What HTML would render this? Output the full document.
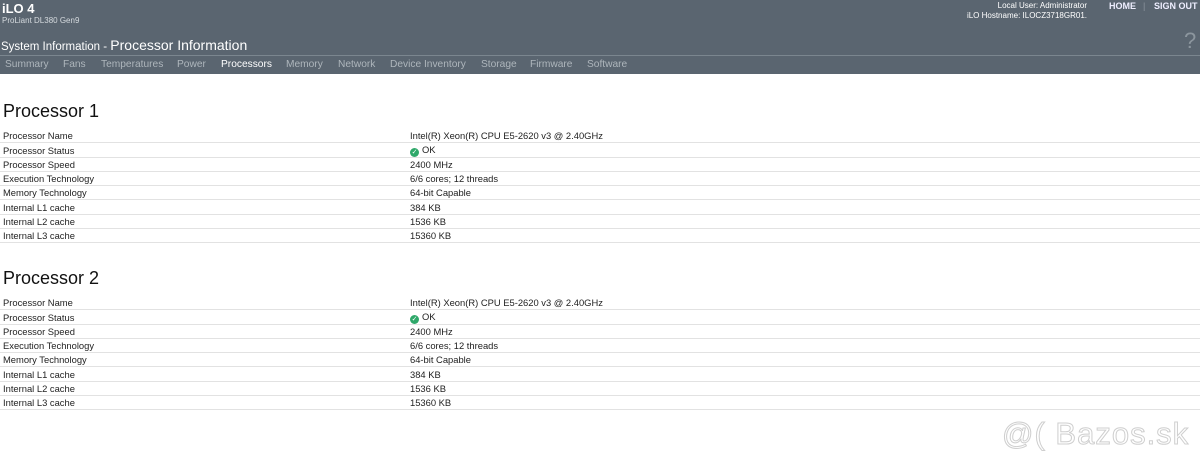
<!DOCTYPE html>
<html><head><meta charset="utf-8"><style>
body{margin:0;width:1200px;height:464px;background:#fff;font-family:"Liberation Sans",Arial,sans-serif;position:relative;overflow:hidden}
.hd{position:absolute;left:0;top:0;width:1200px;height:74px;background:#5a6570}
.hd div{position:absolute;white-space:nowrap}
.sep{left:0;top:55px;width:1200px;height:1px;background:#7b868f}
.nv{top:59px;font-size:10.2px;color:#aeb6bc}
h2{position:absolute;left:3px;margin:0;font-weight:normal;font-size:18px;color:#111}
table{position:absolute;left:0;width:1200px;border-collapse:collapse;font-size:9.4px;color:#222}
td{height:13.3px;padding:0 0 0 3px;border-bottom:1px solid #e2e2e2;line-height:12px;vertical-align:bottom}
td.v{padding-left:0}
.ok{display:inline-block;width:9px;height:9px;border-radius:50%;background:#2fa86a;color:#fff;font-size:7px;line-height:9px;text-align:center;vertical-align:-1px;margin-right:3px}
.wm{position:absolute;left:1002px;top:416px;font-size:31px;color:#fff;-webkit-text-stroke:1px #cfcfcf;letter-spacing:1px}
</style></head><body>
<div class="hd">
<div style="left:2px;top:1px;font-size:13px;font-weight:bold;color:#fff">iLO 4</div>
<div style="left:2px;top:16px;font-size:8px;color:#d5dade">ProLiant DL380 Gen9</div>
<div style="left:1px;top:37px;font-size:11.5px;color:#fff">System Information - <span style="font-size:14px">Processor Information</span></div>
<div style="right:113px;top:1px;font-size:8px;color:#fff;text-align:right;line-height:10px">Local User: Administrator<br>iLO Hostname: ILOCZ3718GR01.</div>
<div style="left:1109px;top:1px;font-size:9px;font-weight:bold;color:#eef">HOME</div>
<div style="left:1143px;top:1px;font-size:9px;color:#8a949c">|</div>
<div style="left:1154px;top:1px;font-size:9px;font-weight:bold;color:#eef">SIGN OUT</div>
<div style="left:1184px;top:28px;font-size:22px;color:#8c969e">?</div>
<div class="sep"></div>
<div class="nv" style="left:5px">Summary</div>
<div class="nv" style="left:63px">Fans</div>
<div class="nv" style="left:101px">Temperatures</div>
<div class="nv" style="left:177px">Power</div>
<div class="nv" style="left:221px;color:#fff">Processors</div>
<div class="nv" style="left:286px">Memory</div>
<div class="nv" style="left:338px">Network</div>
<div class="nv" style="left:390px">Device Inventory</div>
<div class="nv" style="left:481px">Storage</div>
<div class="nv" style="left:530px">Firmware</div>
<div class="nv" style="left:587px">Software</div>
</div>

<h2 style="top:101px">Processor 1</h2>
<table style="top:129px"><colgroup><col style="width:410px"><col></colgroup>
<tr><td>Processor Name</td><td class="v">Intel(R) Xeon(R) CPU E5-2620 v3 @ 2.40GHz</td></tr>
<tr><td>Processor Status</td><td class="v"><span class="ok">✓</span>OK</td></tr>
<tr><td>Processor Speed</td><td class="v">2400 MHz</td></tr>
<tr><td>Execution Technology</td><td class="v">6/6 cores; 12 threads</td></tr>
<tr><td>Memory Technology</td><td class="v">64-bit Capable</td></tr>
<tr><td>Internal L1 cache</td><td class="v">384 KB</td></tr>
<tr><td>Internal L2 cache</td><td class="v">1536 KB</td></tr>
<tr><td>Internal L3 cache</td><td class="v">15360 KB</td></tr>
</table>

<h2 style="top:268px">Processor 2</h2>
<table style="top:296px"><colgroup><col style="width:410px"><col></colgroup>
<tr><td>Processor Name</td><td class="v">Intel(R) Xeon(R) CPU E5-2620 v3 @ 2.40GHz</td></tr>
<tr><td>Processor Status</td><td class="v"><span class="ok">✓</span>OK</td></tr>
<tr><td>Processor Speed</td><td class="v">2400 MHz</td></tr>
<tr><td>Execution Technology</td><td class="v">6/6 cores; 12 threads</td></tr>
<tr><td>Memory Technology</td><td class="v">64-bit Capable</td></tr>
<tr><td>Internal L1 cache</td><td class="v">384 KB</td></tr>
<tr><td>Internal L2 cache</td><td class="v">1536 KB</td></tr>
<tr><td>Internal L3 cache</td><td class="v">15360 KB</td></tr>
</table>
<div class="wm">@( Bazos.sk</div>
</body></html>
